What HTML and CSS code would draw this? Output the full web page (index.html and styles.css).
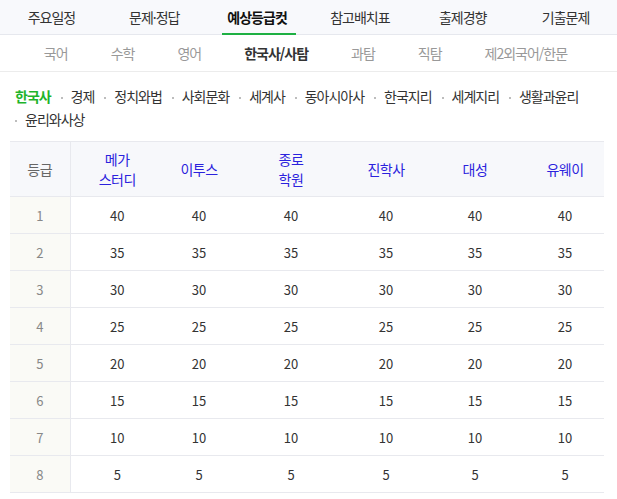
FILE: index.html
```html
<!DOCTYPE html>
<html lang="ko">
<head>
<meta charset="utf-8">
<link rel="stylesheet" href="styles.css">
</head>
<body>
<nav class="gnb">
  <a class="gnb-item">주요일정</a>
  <a class="gnb-item">문제·정답</a>
  <a class="gnb-item active">예상등급컷</a>
  <a class="gnb-item">참고배치표</a>
  <a class="gnb-item">출제경향</a>
  <a class="gnb-item">기출문제</a>
</nav>
<nav class="lnb">
  <a class="lnb-item">국어</a>
  <a class="lnb-item">수학</a>
  <a class="lnb-item">영어</a>
  <a class="lnb-item active">한국사/사탐</a>
  <a class="lnb-item">과탐</a>
  <a class="lnb-item">직탐</a>
  <a class="lnb-item">제2외국어/한문</a>
</nav>
<div class="tags">
  <span class="tag active">한국사</span>
  <span class="tag"><i class="dot"></i>경제</span>
  <span class="tag"><i class="dot"></i>정치와법</span>
  <span class="tag"><i class="dot"></i>사회문화</span>
  <span class="tag"><i class="dot"></i>세계사</span>
  <span class="tag"><i class="dot"></i>동아시아사</span>
  <span class="tag"><i class="dot"></i>한국지리</span>
  <span class="tag"><i class="dot"></i>세계지리</span>
  <span class="tag"><i class="dot"></i>생활과윤리</span>
  <span class="tag first"><i class="dot"></i>윤리와사상</span>
</div>
<table class="grade">
  <colgroup>
    <col class="c0"><col class="c1"><col class="c2"><col class="c3"><col class="c4"><col class="c5"><col class="c6">
  </colgroup>
  <thead>
    <tr>
      <th class="rank-h">등급</th>
      <th>메가<br>스터디</th>
      <th>이투스</th>
      <th>종로<br>학원</th>
      <th>진학사</th>
      <th>대성</th>
      <th>유웨이</th>
    </tr>
  </thead>
  <tbody>
    <tr><td class="rank">1</td><td>40</td><td>40</td><td>40</td><td>40</td><td>40</td><td>40</td></tr>
    <tr><td class="rank">2</td><td>35</td><td>35</td><td>35</td><td>35</td><td>35</td><td>35</td></tr>
    <tr><td class="rank">3</td><td>30</td><td>30</td><td>30</td><td>30</td><td>30</td><td>30</td></tr>
    <tr><td class="rank">4</td><td>25</td><td>25</td><td>25</td><td>25</td><td>25</td><td>25</td></tr>
    <tr><td class="rank">5</td><td>20</td><td>20</td><td>20</td><td>20</td><td>20</td><td>20</td></tr>
    <tr><td class="rank">6</td><td>15</td><td>15</td><td>15</td><td>15</td><td>15</td><td>15</td></tr>
    <tr><td class="rank">7</td><td>10</td><td>10</td><td>10</td><td>10</td><td>10</td><td>10</td></tr>
    <tr><td class="rank">8</td><td>5</td><td>5</td><td>5</td><td>5</td><td>5</td><td>5</td></tr>
  </tbody>
</table>
</body>
</html>
```
FILE: styles.css
```css
* { box-sizing: border-box; margin: 0; padding: 0; }
body {
  font-family: "Noto Sans CJK KR", "Noto Sans", sans-serif;
  font-size: 14px;
  color: #333;
  background: #fff;
  width: 617px;
}
.gnb {
  display: flex;
  height: 35px;
  background: #f8f9fc;
  border-bottom: 1px solid #e6e8ee;
}
.gnb-item {
  flex: 1;
  display: flex;
  align-items: center;
  justify-content: center;
  font-size: 14px;
  letter-spacing: -1px;
  color: #333;
  position: relative;
}
.gnb-item.active {
  font-weight: bold;
  color: #111;
}
.gnb-item.active::after {
  content: "";
  position: absolute;
  left: 16px;
  right: 12px;
  bottom: -1px;
  height: 2px;
  background: #1eb043;
}
.lnb {
  display: flex;
  justify-content: center;
  gap: 43px;
  height: 37px;
  align-items: center;
  border-bottom: 1px solid #ececec;
  padding-right: 6px;
}
.lnb-item {
  font-size: 14px;
  letter-spacing: -1px;
  color: #999;
}
.lnb-item.active {
  color: #333;
  font-weight: bold;
}
.tags {
  padding: 13px 10px 0 15px;
  line-height: 23px;
  font-size: 14px;
  letter-spacing: -1px;
  color: #333;
  height: 69px;
}
.tag { white-space: nowrap; }
.tag.active { color: #1eb42a; font-weight: bold; }
.tag.first .dot { margin-left: 0; }
.dot {
  display: inline-block;
  width: 2px;
  height: 2px;
  background: #bdbdbd;
  vertical-align: middle;
  margin: 0 8px 0 7px;
}
.grade {
  margin-left: 10px;
  width: 594px;
  border-collapse: collapse;
  table-layout: fixed;
  border-top: 1px solid #e8e9ee;
}
.c0 { width: 60px; }
.c1 { width: 94px; }
.c2 { width: 70px; }
.c3 { width: 114px; }
.c4 { width: 76px; }
.c5 { width: 102px; }
.c6 { width: 78px; }
.grade th {
  height: 55px;
  background: #f7f8fb;
  font-weight: normal;
  color: #2b22dd;
  font-size: 14px;
  letter-spacing: -0.5px;
  line-height: 20px;
  border-bottom: 1px solid #e8e9ee;
  text-align: center;
}
.grade th.rank-h {
  color: #666;
  border-right: 1px solid #e8e9ee;
}
.grade td {
  height: 37px;
  text-align: center;
  font-size: 13px;
  color: #333;
  border-bottom: 1px solid #e8e9ee;
}
.grade td.rank {
  background: #fafaf6;
  color: #888;
  border-right: 1px solid #e8e9ee;
}
```
